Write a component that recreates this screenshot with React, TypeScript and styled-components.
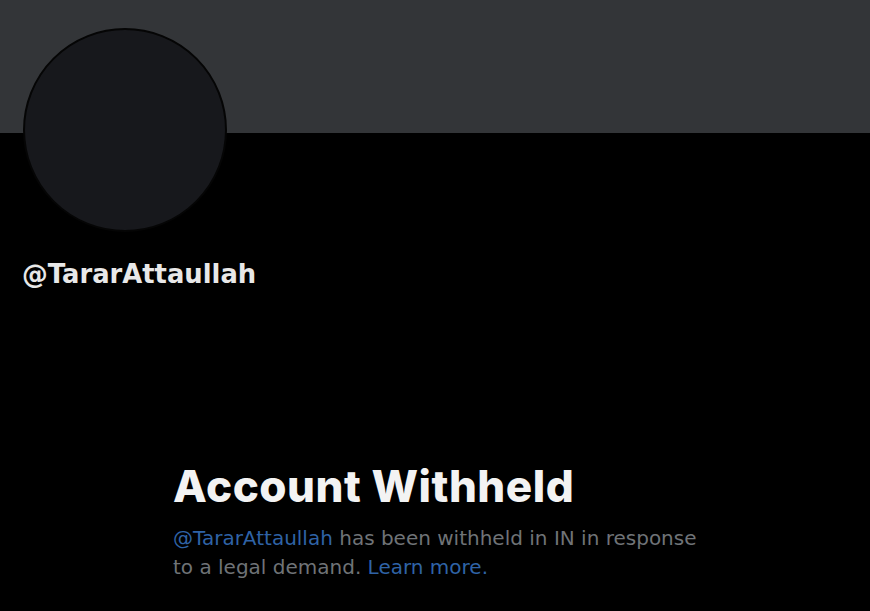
import React from "react";
import styled, { createGlobalStyle } from "styled-components";

const Global = createGlobalStyle`
  html, body { margin: 0; padding: 0; background: #000; }
  body { font-family: Inter, "Noto Sans", sans-serif; }
`;

const Page = styled.div`
  width: 870px;
  height: 611px;
  background: #000;
  overflow: hidden;
  display: flex;
  flex-direction: column;
`;

const Banner = styled.div`
  height: 133px;
  background: #333538;
  flex-shrink: 0;
`;

const Header = styled.div`
  display: flex;
  flex-direction: column;
  align-items: flex-start;
  padding-left: 23px;
`;

const Avatar = styled.div`
  margin-top: -105px;
  width: 200px;
  height: 200px;
  border-radius: 50%;
  background: #17181c;
  border: 2px solid #050505;
`;

const Handle = styled.div`
  margin-top: 27px;
  margin-left: -1px;
  color: #e8e8e8;
  font-family: "DejaVu Sans", sans-serif;
  font-weight: 700;
  font-size: 25.8px;
  line-height: 30px;
`;

const Notice = styled.div`
  display: flex;
  flex-direction: column;
  padding: 171px 0 0 173px;
  width: 600px;
`;

const Title = styled.h1`
  margin: 0;
  color: #f3f3f3;
  font-family: Inter, sans-serif;
  font-size: 44px;
  font-weight: 800;
  line-height: 52px;
  letter-spacing: 0.5px;
`;

const Body = styled.p`
  margin: 12px 0 0;
  color: #6f7377;
  font-family: "DejaVu Sans", sans-serif;
  font-size: 20px;
  line-height: 29px;
`;

const Link = styled.span`
  color: #2f63a6;
`;

export default function App() {
  return (
    <Page>
      <Global />
      <Banner />
      <Header>
        <Avatar />
        <Handle>@TararAttaullah</Handle>
      </Header>
      <Notice>
        <Title>Account Withheld</Title>
        <Body>
          <Link>@TararAttaullah</Link> has been withheld in IN in response
          <br />
          to a legal demand. <Link>Learn more.</Link>
        </Body>
      </Notice>
    </Page>
  );
}
